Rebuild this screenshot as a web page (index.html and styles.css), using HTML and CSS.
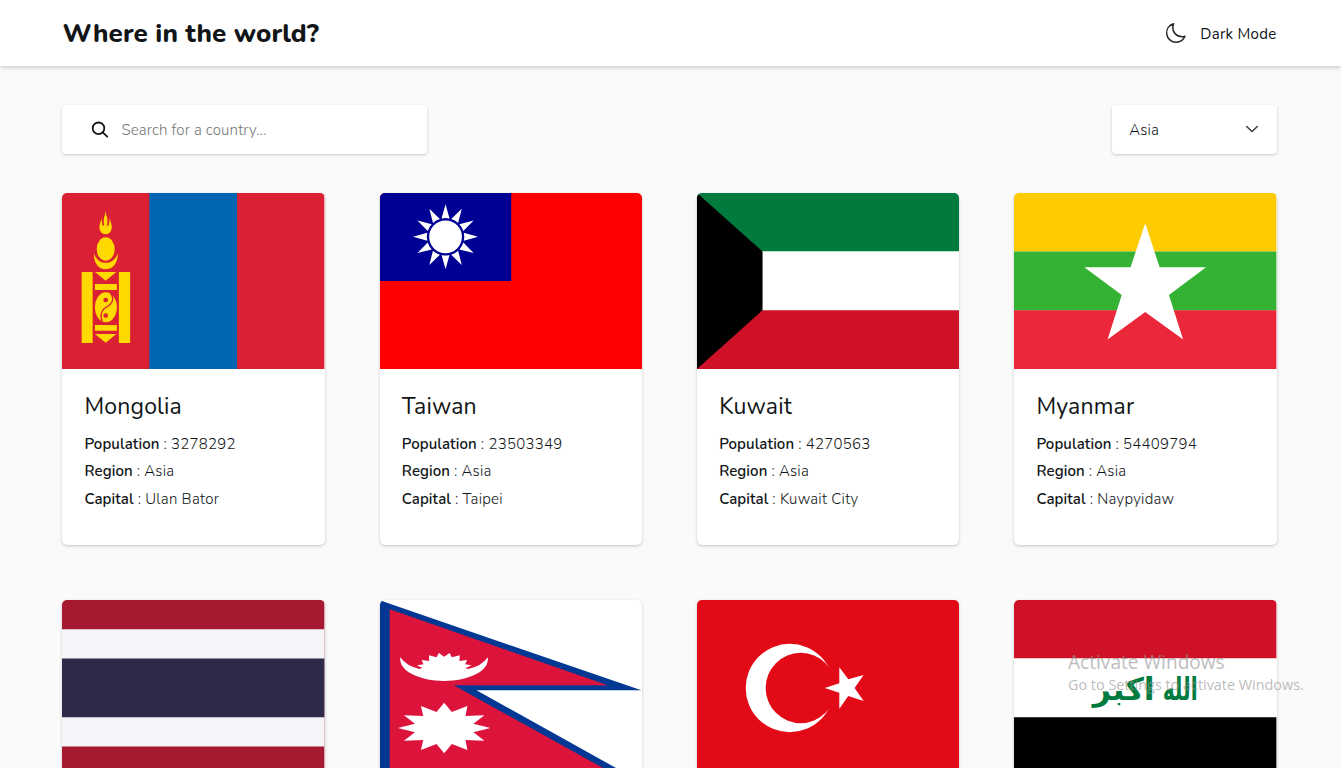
FILE: index.html
```html
<!DOCTYPE html>
<html lang="en">
<head>
<meta charset="utf-8">
<title>Where in the world?</title>
<link rel="stylesheet" href="styles.css">
</head>
<body>
<header class="header">
  <h1 class="brand">Where in the world?</h1>
  <button class="theme" type="button">
    <svg class="moon" viewBox="0 0 22 22"><path d="M8.6 1.7C3.900 3.100 1.200 7.200 1.700 11.800c.6 5 4.600 8.500 9.400 8.500 4 0 7.500-2.500 8.900-6.200-1.200.5-2.600.7-4 .5C9.800 13.900 6.200 8 8.600 1.700Z"/></svg>
    <span>Dark Mode</span>
  </button>
</header>
<main class="main">
  <div class="filters">
    <label class="search">
      <svg class="glass" viewBox="0 0 18 18"><circle cx="7.500" cy="7.300" r="5.800"/><path d="m11.700 11.400 4.500 4.300"/></svg>
      <span class="placeholder">Search for a country...</span>
    </label>
    <div class="select"><span>Asia</span><svg class="chevron" viewBox="0 0 14 10"><path d="m1.700 1.500 5.300 5 5.300-5"/></svg></div>
  </div>
  <section class="grid">
    <article class="card">
      <svg class="flag" viewBox="0 0 263 176" preserveAspectRatio="none">
        <path fill="#da2032" d="M0 0h263v176H0z"/><path fill="#0066b3" d="M87.500 0h88v176h-88z"/>
        <g fill="#ffd900">
          <path d="M43.700 17.700Q43.300 22 42 25 41.500 29 42.300 32.500 40.500 33.500 40.300 30.500L39.500 25Q39 28.500 37.800 31.500C36.500 37 39.500 41.300 43.700 41.300S51 37 49.600 31.500Q48.400 28.500 47.900 25L47.100 30.500Q46.900 33.500 45.100 32.500 45.900 29 45.400 25 44.100 22 43.700 17.700Z"/>
          <ellipse cx="43.800" cy="56" rx="9" ry="11.800"/>
          <path d="M32 60.300C34 66 38 69.800 43.800 69.800S54 66 56 60.300C56 70 51 76.300 43.800 76.300S31.500 70 32 60.300ZM19.700 79h11v71h-11zM57 79h11.300v71H57zM33 79h21.500l-10.700 8.700zM33 91h22v6H33zM33 132h22v5.700H33zM33 141h21.500l-10.700 8.700z"/>
          <ellipse cx="44" cy="114.300" rx="11" ry="15"/>
        </g>
        <g fill="none" stroke="#da2032" stroke-width="1.300"><path d="M48.500 100c5 6 1 11.500-3 13.500-6 3-8 9-5 15"/><circle cx="43.800" cy="107" r="1.700" fill="#da2032"/><circle cx="43.800" cy="122.500" r="1.700" fill="#da2032"/></g>
      </svg>
      <div class="body"><h2 class="name">Mongolia</h2><p class="row"><b>Population</b> : 3278292</p><p class="row"><b>Region</b> : Asia</p><p class="row"><b>Capital</b> : Ulan Bator</p></div>
    </article>
    <article class="card">
      <svg class="flag" viewBox="0 0 263 176" preserveAspectRatio="none">
        <defs><path id="ray" d="M0-32.500 4-18.300Q0-19.300-4-18.300Z"/></defs>
        <path fill="#f00" d="M0 0h263v176H0z"/><path fill="#000095" d="M0 0h131.500v88H0z"/>
        <g fill="#fff" transform="translate(65.700 43.800)"><circle r="16.400"/>
          <use href="#ray"/><use href="#ray" transform="rotate(30)"/><use href="#ray" transform="rotate(60)"/><use href="#ray" transform="rotate(90)"/><use href="#ray" transform="rotate(120)"/><use href="#ray" transform="rotate(150)"/><use href="#ray" transform="rotate(180)"/><use href="#ray" transform="rotate(210)"/><use href="#ray" transform="rotate(240)"/><use href="#ray" transform="rotate(270)"/><use href="#ray" transform="rotate(300)"/><use href="#ray" transform="rotate(330)"/></g>
      </svg>
      <div class="body"><h2 class="name">Taiwan</h2><p class="row"><b>Population</b> : 23503349</p><p class="row"><b>Region</b> : Asia</p><p class="row"><b>Capital</b> : Taipei</p></div>
    </article>
    <article class="card">
      <svg class="flag" viewBox="0 0 263 176" preserveAspectRatio="none">
        <path fill="#007a3d" d="M0 0h263v58.500H0z"/><path fill="#fff" d="M0 58.500h263v59H0z"/><path fill="#ce1126" d="M0 117.300h263V176H0z"/><path d="M0 0l65.700 58.500v58.800L0 176z"/>
      </svg>
      <div class="body"><h2 class="name">Kuwait</h2><p class="row"><b>Population</b> : 4270563</p><p class="row"><b>Region</b> : Asia</p><p class="row"><b>Capital</b> : Kuwait City</p></div>
    </article>
    <article class="card">
      <svg class="flag" viewBox="0 0 263 176" preserveAspectRatio="none">
        <path fill="#fecb00" d="M0 0h263v58.500H0z"/><path fill="#34b233" d="M0 58.500h263v59H0z"/><path fill="#ea2839" d="M0 117.300h263V176H0z"/>
        <path fill="#fff" d="M131.500 30.300 146 74.300h46.500L155.300 102l14.200 44.500-38-27.500-37.700 27.500L108 102 70.500 74.300h46.300z"/>
      </svg>
      <div class="body"><h2 class="name">Myanmar</h2><p class="row"><b>Population</b> : 54409794</p><p class="row"><b>Region</b> : Asia</p><p class="row"><b>Capital</b> : Naypyidaw</p></div>
    </article>
    <article class="card">
      <svg class="flag" viewBox="0 0 263 176" preserveAspectRatio="none">
        <path fill="#a51931" d="M0 0h263v176H0z"/><path fill="#f4f5f8" d="M0 29.300h263v117.300H0z"/><path fill="#2d2a4a" d="M0 58.600h263v58.700H0z"/>
      </svg>
    </article>
    <article class="card">
      <svg class="flag" viewBox="0 0 263 176" preserveAspectRatio="none">
        <path fill="#003893" d="M0 1q1.500-1 4 .8L262 90.300H96.700L251 176H0z"/><path fill="#dc143c" d="M9.700 9.300 228.300 85.300H74L238 176H9.700z"/>
        <g fill="#fff" transform="translate(0 -4) scale(.3333)">
          <path d="M61 184Q80 211 119 219L127 216 111 208 131 205 125 192 148 195 147 178 170 184 177 171 193 182 209 171 216 184 240 178 239 195 262 192 256 205 275 208 257 217 265 219Q306 211 324 184C331 226 265 255 193 255S55 226 61 184Z"/>
          <path d="M193 320 216 348 263 330 257 360 314 358 281 383 332 396 281 409 314 434 257 432 263 462 216 444 193 472 170 444 123 462 130 432 72 434 105 409 54 396 105 383 72 358 130 360 123 330 170 348Z"/>
        </g>
      </svg>
    </article>
    <article class="card">
      <svg class="flag" viewBox="0 0 263 176" preserveAspectRatio="none">
        <path fill="#e30a17" d="M0 0h263v176H0z"/>
        <g transform="translate(-7 -4) scale(.3333)"><circle cx="300" cy="276" r="132.500" fill="#fff"/><circle cx="333" cy="276" r="105.500" fill="#e30a17"/><path fill="#fff" d="M405 276 449 262V214L476 250 522 237 495 276 522 315 476 300 449 338V290Z"/></g>
      </svg>
    </article>
    <article class="card">
      <svg class="flag" viewBox="0 0 263 176" preserveAspectRatio="none">
        <path fill="#ce1126" d="M0 0h263v58.500H0z"/><path fill="#fff" d="M0 58.500h263v59H0z"/><path d="M0 117.300h263V176H0z"/>
        <text class="takbir" x="166.500" y="100" textLength="35" lengthAdjust="spacingAndGlyphs">الله</text>
        <text class="takbir" x="110" y="100" textLength="62" lengthAdjust="spacingAndGlyphs">اكبر</text>
      </svg>
    </article>
  </section>
</main>
<aside class="activate"><div class="activate-title">Activate Windows</div><div class="activate-text">Go to Settings to activate Windows.</div></aside>
</body>
</html>
```
FILE: styles.css
```css
* { box-sizing: border-box; }
body { margin: 0; height: 768px; overflow: hidden; background: #fafafa; color: #111517; font-family: Nunito, "Open Sans", sans-serif; font-weight: 300; font-size: 15px; letter-spacing: .17px; }
.header { height: 66px; padding: 2px 64.500px 0 62.500px; display: flex; align-items: center; justify-content: space-between; background: #fff; box-shadow: 0 2px 4px rgba(0,0,0,.17); }
.brand { margin: 0; font-size: 26px; font-weight: 800; line-height: 34px; white-space: nowrap; letter-spacing: .12px; }
.theme { display: flex; align-items: center; gap: 13px; padding: 0; border: 0; background: none; color: inherit; font: 400 15px/22px Nunito, "Open Sans", sans-serif; letter-spacing: .28px; }
.moon { width: 22px; height: 22px; margin-top: -2px; fill: none; stroke: #25282a; stroke-width: 1.500; stroke-linejoin: round; }
.main { padding: 39px 64.200px 0 62.400px; }
.filters { display: flex; justify-content: space-between; margin-bottom: 39px; }
.search, .select { display: flex; align-items: center; height: 49px; background: #fff; border-radius: 4px; box-shadow: 0 1px 3px rgba(0,0,0,.2); }
.search { width: 365px; padding-left: 29px; gap: 12px; }
.glass { width: 18px; height: 18px; fill: none; stroke: #111517; stroke-width: 1.800; stroke-linecap: round; }
.placeholder { color: #757575; }
.select { width: 165px; padding: 0 18px 0 17.500px; justify-content: space-between; }
.chevron { width: 14px; height: 10px; fill: none; stroke: #3b3e40; stroke-width: 1.600; stroke-linecap: round; }
.grid { display: grid; grid-template-columns: repeat(4, 1fr); grid-auto-rows: 352px; gap: 55px 54.970px; }
.card { background: #fff; border-radius: 5px; overflow: hidden; box-shadow: 0 1px 3px rgba(0,0,0,.22); }
.flag { display: block; width: 100%; height: 176px; }
.body { padding: 21px 22.100px; }
.name { margin: 0 0 6.600px; font-size: 23px; line-height: 34px; font-weight: 400; }
.row { margin: 0; line-height: 27.500px; white-space: nowrap; letter-spacing: .25px; }
.row b { font-weight: 600; letter-spacing: .08px; }
.takbir { font: 700 31px "DejaVu Sans", sans-serif; letter-spacing: 0; fill: #007a3d; text-anchor: middle; }
.activate { position: absolute; left: 1068px; top: 649px; color: rgba(150,150,150,.65); font-family: "Open Sans", sans-serif; font-weight: 400; white-space: nowrap; letter-spacing: 0; }
.activate-title { font-size: 19.100px; line-height: 26px; }
.activate-text { font-size: 14.400px; line-height: 19px; }
```
